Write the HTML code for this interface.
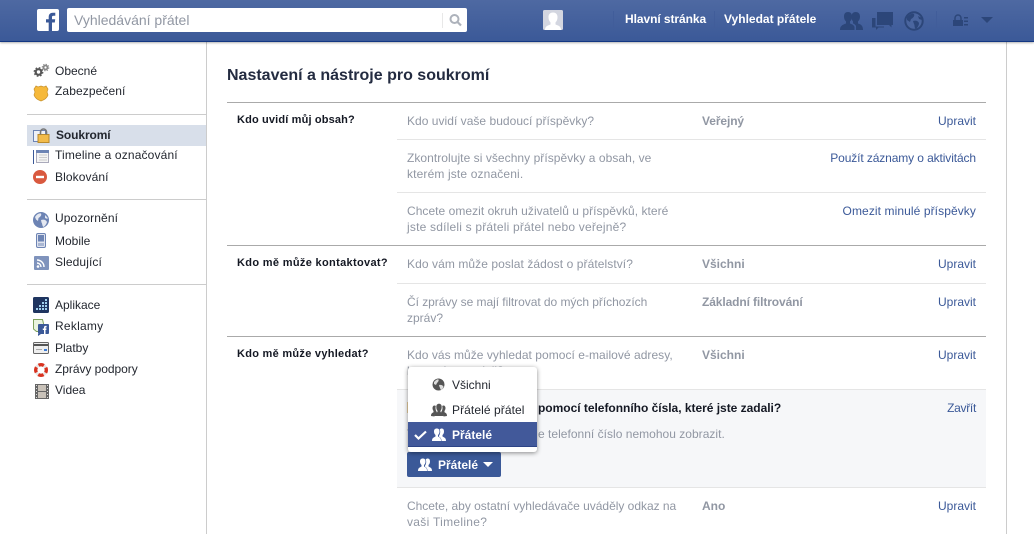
<!DOCTYPE html>
<html><head><meta charset="utf-8"><style>
html,body{margin:0;padding:0;background:#fff}
#p{position:relative;width:1034px;height:534px;overflow:hidden;background:#fff;font-family:"Liberation Sans",Arial,sans-serif;font-size:12px;color:#141823}
.t{position:absolute;white-space:nowrap;line-height:16px}
.g{color:#9197a3}
.l{color:#3b5998}
.b{font-weight:bold}
.r{position:absolute;right:58px;white-space:nowrap;line-height:16px;color:#3b5998}
.s{color:#23272f}
.h{position:absolute;height:1px;background:#e5e5e5}
.ic{position:absolute;overflow:visible}
</style></head><body><div id="p">
<!-- page borders -->
<div style="position:absolute;left:206px;top:42px;width:1px;height:492px;background:#ccc"></div>
<div style="position:absolute;left:1006px;top:42px;width:1px;height:492px;background:#ccc"></div>
<!-- top bar -->
<div style="position:absolute;left:0;top:0;width:1034px;height:41px;background:linear-gradient(#4e69a2,#3b5998);border-bottom:1px solid #133783;box-shadow:0 1px 2px rgba(0,0,0,.3)"></div>
<svg class="ic" style="left:37px;top:9px" width="22" height="22"><rect width="22" height="22" rx="2" fill="#fff"/><path d="M15 22v-8.500h2.800l.4-3.300H15V8.300c0-1 .3-1.600 1.600-1.600h1.700V3.800c-.4 0-1.300-.1-2.500-.1-2.500 0-4.100 1.500-4.100 4.200v2.300H9v3.300h2.700V22z" fill="#3b5998"/></svg>
<div style="position:absolute;left:67px;top:8px;width:400px;height:24px;background:#fff;border-radius:2px"></div>
<div class="t" style="left:74px;top:12px;font-size:14px;color:#9197a3">Vyhledávání přátel</div>
<div style="position:absolute;left:442px;top:13px;width:1px;height:15px;background:#e8e8e8"></div>
<svg class="ic" style="left:449px;top:13px" width="14" height="14"><circle cx="5.500" cy="6" r="4" fill="none" stroke="#adb2bb" stroke-width="2"/><path d="M8.500 9l3.500 3.500" stroke="#adb2bb" stroke-width="2.200"/></svg>
<svg class="ic" style="left:543px;top:10px" width="20" height="20"><rect width="20" height="20" rx="1.500" fill="#d3d6e0"/><path d="M2 20c0-4 3-4.500 5.500-5.500v-2C6 11 5.500 9 5.500 7c0-3 2-4.500 4.500-4.500S14.500 4 14.500 7c0 2-.5 4-2 5.500v2C15 15.500 18 16 18 20z" fill="#fff"/></svg>
<div style="position:absolute;left:613px;top:11px;width:1px;height:17px;background:#415d9a"></div>
<div style="position:absolute;left:714px;top:11px;width:1px;height:17px;background:#415d9a"></div>
<div class="t b" style="left:625px;top:11px;color:#fff;letter-spacing:-.07px">Hlavní stránka</div>
<div class="t b" style="left:724px;top:11px;color:#fff">Vyhledat přátele</div>
<svg class="ic" style="left:840px;top:11px" width="24" height="20" fill="#2c4679"><path d="M0 19c0-4 2-5 6-6.500v-2C4.500 9 4 7.500 4 5.500 4 2.500 5.500 1 8 1s4 1.500 4 4.500c0 2-.5 3.500-2 5v2c2 .8 4 1.500 4.500 3.500v3z"/><path d="M16 19v-4c-.5-1.500-2-2-3-2.800v-1.700C11.800 9 11.500 7.500 11.500 5.500c0-3 1.800-4.500 4.200-4.500S20 2.500 20 5.500c0 2-.5 3.500-2 5v2c3 1 5 2 5 6.500z"/></svg>
<svg class="ic" style="left:872px;top:11px" width="22" height="20" fill="#2c4679"><path d="M5 1h16v13h-1.500v2.500L17 14H5z"/><path d="M0 7h3.500v8.500H12V16.500H6.500L4 19v-2.500H0z"/></svg>
<svg class="ic" style="left:904px;top:11px" width="20" height="20"><circle cx="10" cy="10" r="8.700" fill="#4a659e" stroke="#2c4679" stroke-width="2"/><path d="M3 6c3-3 5-4 7-3 1 2-1 4-3 5l-1 3-3-2zM9 10c3-1 5 0 6 2 0 2-1 4-3 6-2-1-1-4-2-5zM14 5l4 2v2l-3-1z" fill="#2c4679"/></svg>
<div style="position:absolute;left:936px;top:11px;width:1px;height:17px;background:#415d9a"></div>
<svg class="ic" style="left:952px;top:14px" width="16" height="13" fill="#2c4679"><path d="M1 6h10v6H1z"/><path d="M3 6V4a3 3 0 016 0v2" fill="none" stroke="#2c4679" stroke-width="1.500"/><path d="M12 3h4v1.500h-4zM12 6.500h4V8h-4zM12 10h4v1.500h-4z"/></svg>
<svg class="ic" style="left:981px;top:17px" width="12" height="7"><path d="M0 0h12L6 6z" fill="#2c4679"/></svg>

<!-- sidebar -->
<div style="position:absolute;left:27px;top:125px;width:179px;height:21px;background:#d8dfea"></div>
<div style="position:absolute;left:27px;top:114px;width:179px;height:1px;background:#ccc"></div>
<div style="position:absolute;left:27px;top:199px;width:179px;height:1px;background:#ccc"></div>
<div style="position:absolute;left:27px;top:284px;width:179px;height:1px;background:#ccc"></div>
<div class="t s" style="left:55px;top:63px">Obecné</div>
<div class="t s" style="left:55px;top:83px;letter-spacing:.1px">Zabezpečení</div>
<div class="t b s" style="left:56px;top:127px;letter-spacing:-.1px">Soukromí</div>
<div class="t s" style="left:55px;top:147px;letter-spacing:.15px">Timeline a označování</div>
<div class="t s" style="left:55px;top:169px;letter-spacing:.1px">Blokování</div>
<div class="t s" style="left:55px;top:210px;letter-spacing:.1px">Upozornění</div>
<div class="t s" style="left:55px;top:233px">Mobile</div>
<div class="t s" style="left:55px;top:254px;letter-spacing:.1px">Sledující</div>
<div class="t s" style="left:55px;top:297px">Aplikace</div>
<div class="t s" style="left:55px;top:318px;letter-spacing:.25px">Reklamy</div>
<div class="t s" style="left:55px;top:340px">Platby</div>
<div class="t s" style="left:55px;top:361px;letter-spacing:-.05px">Zprávy podpory</div>
<div class="t s" style="left:55px;top:382px">Videa</div>
<!-- sidebar icons -->
<svg class="ic" style="left:34px;top:64px" width="16" height="13"><circle cx="4.500" cy="8" r="2.800" fill="none" stroke="#555" stroke-width="2.200"/><circle cx="4.500" cy="8" r="4.300" fill="none" stroke="#555" stroke-width="1.200" stroke-dasharray="1.700 1.700"/><circle cx="11.500" cy="3.500" r="2" fill="none" stroke="#888" stroke-width="1.800"/><circle cx="11.500" cy="3.500" r="3.300" fill="none" stroke="#888" stroke-width="1" stroke-dasharray="1.300 1.300"/></svg>
<svg class="ic" style="left:34px;top:86px" width="14" height="15"><path d="M2 0l2 1 3-1 3 1 2-1 2 3-1 3 1 3c-1 3-4 5-7 6-3-1-6-3-7-6l1-3-1-3z" fill="#f6b93b" stroke="#c8922d" stroke-width=".7"/></svg>
<svg class="ic" style="left:33px;top:128px" width="17" height="15"><rect x=".5" y="2.500" width="12" height="11" fill="#eef1f7" stroke="#6d84b4"/><rect x="5" y="6.500" width="11" height="8" fill="#f2bb4a" stroke="#b98a2c"/><path d="M7.500 6.500V4a3 3 0 016 0v2.500" fill="none" stroke="#777" stroke-width="1.600"/></svg>
<svg class="ic" style="left:33px;top:150px" width="16" height="14"><rect x="3.500" y=".5" width="12" height="12" fill="#f4f4f4" stroke="#aab"/><rect x="3" y="0" width="13" height="3" fill="#6d84b4"/><path d="M.5 0v14" stroke="#3b5998"/><path d="M6 5h8M6 7.500h8M6 10h8" stroke="#ccc"/></svg>
<svg class="ic" style="left:33px;top:170px" width="14" height="14"><circle cx="7" cy="7" r="7" fill="#d9593f"/><rect x="3" y="5.800" width="8" height="2.400" fill="#fff"/></svg>
<svg class="ic" style="left:33px;top:212px" width="16" height="16"><circle cx="8" cy="8" r="8" fill="#6d84b4"/><path d="M2 5c2-3 4-4 6-3.500 1 2-1 3.500-2.500 4.500L5 9 3 7.500zM8 8c3-1 5 0 6 2-.5 2-2 4-3.500 5-1.500-1-1-3.500-2-4.500zM12 3l2.500 2.500V7L12 6z" fill="#e4e8f1"/></svg>
<svg class="ic" style="left:36px;top:233px" width="10" height="15"><rect x=".5" y=".5" width="9" height="14" rx="1.500" fill="#dfe3ee" stroke="#6d84b4"/><rect x="2" y="2" width="6" height="6.500" fill="#6d84b4"/><rect x="2" y="10" width="6" height="3" fill="#a9b6d2"/></svg>
<svg class="ic" style="left:34px;top:256px" width="15" height="14"><rect width="15" height="14" rx="1" fill="#7f93bc"/><circle cx="4" cy="10.500" r="1.300" fill="#fff"/><path d="M3 7a4 4 0 014 4M3 4a7 7 0 017 7" fill="none" stroke="#fff" stroke-width="1.400"/></svg>
<svg class="ic" style="left:33px;top:297px" width="16" height="16"><rect width="16" height="16" rx="1.500" fill="#1f3560"/><path d="M3 11h2v2H3zM6 11h2v2H6zM9 11h2v2H9zM12 11h2v2h-2zM9 8h2v2H9zM12 8h2v2h-2zM12 5h2v2h-2zM6 8h2v2H6zM12 2h2v2h-2zM9 5h2v2H9z" fill="#9fd0ee"/></svg>
<svg class="ic" style="left:33px;top:319px" width="16" height="16"><path d="M.5.5h9l1 4v8h-7L.5 10z" fill="#eaf3df" stroke="#7fa25d"/><rect x="5" y="5" width="11" height="10" rx="1" fill="#3b5998"/><path d="M5 15v2l3-2z" fill="#3b5998"/><path d="M11 15v-4H9.800V9.500H11V8.500c0-1 .6-1.600 1.600-1.600h1v1.500H13c-.4 0-.5.200-.5.500v.6h1l-.2 1.500h-.8v4z" fill="#fff"/></svg>
<svg class="ic" style="left:33px;top:342px" width="16" height="12"><rect x=".5" y=".5" width="15" height="11" rx="1" fill="#eee" stroke="#666"/><rect x="1" y="2" width="14" height="2" fill="#555"/><path d="M3 7.500h6" stroke="#aaa"/><rect x="11" y="7" width="3" height="2" fill="#3b7bd4"/></svg>
<svg class="ic" style="left:33px;top:362px" width="16" height="16"><circle cx="8" cy="8" r="5.300" fill="none" stroke="#e8e8e8" stroke-width="3"/><circle cx="8" cy="8" r="5.300" fill="none" stroke="#d8321f" stroke-width="3.400" stroke-dasharray="5.500 2.830" stroke-dashoffset="2.700"/></svg>
<svg class="ic" style="left:35px;top:384px" width="14" height="15"><rect width="14" height="15" fill="#666"/><rect x="3" y="1" width="8" height="6" fill="#c9c2b9"/><rect x="3" y="8" width="8" height="6" fill="#c9c2b9"/><path d="M1 1.500h1M1 4.500h1M1 7.500h1M1 10.500h1M1 13.500h1M12 1.500h1M12 4.500h1M12 7.500h1M12 10.500h1M12 13.500h1" stroke="#ddd"/></svg>

<!-- main -->
<div class="t b" style="left:227px;top:66px;font-size:16px;line-height:20px;color:#232b40">Nastavení a nástroje pro soukromí</div>
<div style="position:absolute;left:227px;top:102px;width:759px;height:1px;background:#aaa"></div>
<div style="position:absolute;left:227px;top:245px;width:759px;height:1px;background:#aaa"></div>
<div style="position:absolute;left:227px;top:336px;width:759px;height:1px;background:#aaa"></div>
<div class="h" style="left:397px;top:139px;width:589px"></div>
<div class="h" style="left:397px;top:192px;width:589px"></div>
<div class="h" style="left:397px;top:283px;width:589px"></div>

<div class="t b" style="left:237px;top:112px;font-size:11px;letter-spacing:.15px">Kdo uvidí můj obsah?</div>
<div class="t b" style="left:237px;top:255px;font-size:11px;letter-spacing:.33px">Kdo mě může kontaktovat?</div>
<div class="t b" style="left:237px;top:346px;font-size:11px;letter-spacing:.28px">Kdo mě může vyhledat?</div>

<div class="t g" style="left:407px;top:113px;letter-spacing:.03px">Kdo uvidí vaše budoucí příspěvky?</div>
<div class="t g b" style="left:702px;top:113px;letter-spacing:-.1px">Veřejný</div>
<div class="r" style="top:113px">Upravit</div>
<div class="t g" style="left:407px;top:150px;letter-spacing:.05px">Zkontrolujte si všechny příspěvky a obsah, ve</div>
<div class="t g" style="left:407px;top:166px;letter-spacing:.14px">kterém jste označeni.</div>
<div class="r" style="top:150px;letter-spacing:-.11px">Použít záznamy o aktivitách</div>
<div class="t g" style="left:407px;top:203px;letter-spacing:.04px">Chcete omezit okruh uživatelů u příspěvků, které</div>
<div class="t g" style="left:407px;top:219px;letter-spacing:.2px">jste sdíleli s přáteli přátel nebo veřejně?</div>
<div class="r" style="top:203px;letter-spacing:.09px">Omezit minulé příspěvky</div>
<div class="t g" style="left:407px;top:256px;letter-spacing:.08px">Kdo vám může poslat žádost o přátelství?</div>
<div class="t g b" style="left:702px;top:256px">Všichni</div>
<div class="r" style="top:256px">Upravit</div>
<div class="t g" style="left:407px;top:294px;letter-spacing:-.04px">Čí zprávy se mají filtrovat do mých příchozích</div>
<div class="t g" style="left:407px;top:310px">zpráv?</div>
<div class="t g b" style="left:702px;top:294px;letter-spacing:-.11px">Základní filtrování</div>
<div class="r" style="top:294px">Upravit</div>
<div class="t g" style="left:407px;top:347px;letter-spacing:.04px">Kdo vás může vyhledat pomocí e-mailové adresy,</div>
<div class="t g" style="left:407px;top:363px">kterou jste zadali?</div>
<div class="t g b" style="left:702px;top:347px">Všichni</div>
<div class="r" style="top:347px">Upravit</div>

<!-- expanded -->
<div style="position:absolute;left:397px;top:389px;width:589px;height:99px;background:#f6f7f9;border-top:1px solid #e5e5e5;border-bottom:1px solid #e5e5e5;box-sizing:border-box"></div>
<div style="position:absolute;left:407px;top:402px;width:1px;height:11px;background:#e8cfa0"></div>
<div class="t b" style="left:538px;top:400px;color:#141823;letter-spacing:-.02px">pomocí telefonního čísla, které jste zadali?</div>
<div class="r" style="top:400px;letter-spacing:-.3px">Zavřít</div>
<div class="t g" style="left:407px;top:426px">T</div>
<div class="t g" style="left:538px;top:426px;letter-spacing:.02px">e telefonní číslo nemohou zobrazit.</div>
<div style="position:absolute;left:407px;top:452px;width:94px;height:25px;background:#3b5998;border-radius:2px"></div>
<svg class="ic" style="left:418px;top:458px" width="14" height="13" fill="#fff"><path d="M0 13c0-3 1.500-3.500 3.500-4.500V7C2.500 6 2 5 2 3.500 2 1.500 3 .5 4.800.5S7.500 1.500 7.500 3.500C7.500 5 7 6 6 7v1.500c2 1 3 1.500 3 4.500z"/><path d="M9.500 13c0-2.500-1-3.500-2.500-4.200V7.600c.8-1 1.200-2.200 1.200-4 0-.8-.2-1.500-.5-2.100C8 1 8.700.5 9.500.5c1.700 0 2.500 1 2.500 3 0 1.500-.5 2.500-1.500 3.500v1.500c2 1 3.500 1.500 3.500 4.500z"/></svg>
<div class="t b" style="left:438px;top:457px;color:#fff">Přátelé</div>
<svg class="ic" style="left:483px;top:462px" width="10" height="6"><path d="M0 0h10L5 5z" fill="#fff"/></svg>

<div class="t g" style="left:407px;top:498px;letter-spacing:-.02px">Chcete, aby ostatní vyhledávače uváděly odkaz na</div>
<div class="t g" style="left:407px;top:514px;letter-spacing:.3px">vaši Timeline?</div>
<div class="t g b" style="left:702px;top:498px">Ano</div>
<div class="r" style="top:498px">Upravit</div>

<!-- dropdown -->
<div style="position:absolute;left:408px;top:367px;width:129px;height:85px;background:#fff;border-radius:3px;box-shadow:0 1px 5px rgba(0,0,0,.45)"></div>
<div style="position:absolute;left:408px;top:422px;width:129px;height:25px;background:#42599a;border-bottom:1px solid #2d4486;box-sizing:border-box"></div>
<svg class="ic" style="left:432px;top:378px" width="13" height="13"><circle cx="6.500" cy="6.500" r="6" fill="#555"/><path d="M2 4c2-2 3-3 4.500-2.500C7 3 6 4 5 5L4 7 2 6zM7 7c2-.5 3.500 0 4.500 1.500-.3 1.500-1.300 3-2.500 3.500-1-1-.8-2.500-1.500-3z" fill="#ddd"/></svg>
<svg class="ic" style="left:431px;top:403px" width="16" height="13" fill="#555"><path d="M0 13c0-2.500 1-3 2.500-3.800V8C1.800 7 1.500 6 1.500 5 1.500 3.500 2.300 2.500 3.500 2.500c.5 0 1 .2 1.300.5-.2.700-.3 1.300-.3 2 0 1.500.5 3 1.300 4v1c-1.500.8-2.300 1.500-2.300 3.500z"/><path d="M3.500 13c0-2.500 1.500-3 3-4V7.800C5.700 6.800 5.300 5.500 5.300 4 5.300 2 6.300 .8 8 .8s2.700 1.200 2.700 3.200c0 1.500-.4 2.800-1.200 3.800V9c1.500 1 3 1.500 3 4z"/><path d="M16 13c0-2.500-1-3-2.500-3.800V8c.7-1 1-2 1-3 0-1.500-.8-2.500-2-2.500-.5 0-1 .2-1.300.5.200.7.300 1.300.3 2 0 1.500-.5 3-1.300 4v1c1.500.8 2.300 1.500 2.300 3.500z"/></svg>
<svg class="ic" style="left:414px;top:430px" width="13" height="10"><path d="M1 5l3.500 3.500L12 1.500" fill="none" stroke="#fff" stroke-width="2.200"/></svg>
<svg class="ic" style="left:432px;top:428px" width="14" height="13" fill="#fff"><path d="M0 13c0-3 1.500-3.500 3.500-4.500V7C2.500 6 2 5 2 3.500 2 1.500 3 .5 4.800.5S7.500 1.500 7.500 3.500C7.500 5 7 6 6 7v1.500c2 1 3 1.500 3 4.500z"/><path d="M9.500 13c0-2.500-1-3.500-2.500-4.200V7.600c.8-1 1.200-2.200 1.200-4 0-.8-.2-1.500-.5-2.100C8 1 8.700.5 9.500.5c1.700 0 2.500 1 2.500 3 0 1.500-.5 2.500-1.500 3.500v1.500c2 1 3.500 1.500 3.500 4.500z"/></svg>
<div class="t s" style="left:452px;top:377px">Všichni</div>
<div class="t s" style="left:452px;top:402px;letter-spacing:.08px">Přátelé přátel</div>
<div class="t b" style="left:452px;top:427px;color:#fff">Přátelé</div>
</div></body></html>
